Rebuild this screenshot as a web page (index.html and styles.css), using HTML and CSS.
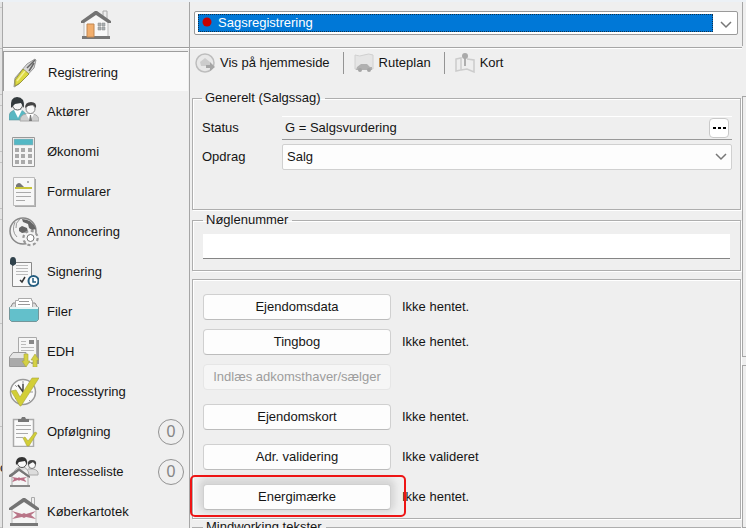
FILE: index.html
```html
<!DOCTYPE html>
<html lang="da">
<head>
<meta charset="utf-8">
<title>Sagsregistrering</title>
<link rel="stylesheet" href="styles.css">
</head>
<body>
<div class="app">
  <div class="gutter"><i></i><i></i><i></i><i></i><i></i><i></i><i></i><i></i><i></i><i></i><span>c</span><i></i></div>

  <aside class="sidebar">
    <a class="home" href="#" aria-label="Hjem">
      <svg width="30" height="30" viewBox="0 0 30 30">
        <path d="M22 1h4v9h-4z" fill="#eee" stroke="#aaa"/>
        <path d="M3 10 15 3l12 8v16H3z" fill="#f8f8f8" stroke="#bbb"/>
        <path d="M0 11 14 1h2l14 10v2h-3L15 5 3 13H0z" fill="#747474"/>
        <path d="M1 26h28v3H1z" fill="#777"/>
        <path d="M6 14h7v13H6z" fill="#f2ae6c" stroke="#c08650"/>
        <path d="M17 13h3v3h-3zm4 0h3v3h-3zm-4 4h3v3h-3zm4 0h3v3h-3z" fill="#a9b0b3" stroke="#888" stroke-width=".5"/>
      </svg>
    </a>
    <nav class="menu">
      <a class="item active" href="#">
        <svg width="30" height="30" viewBox="0 0 30 30">
          <path d="M4 29 5 20 17 6l8-5 1 1-2 8L9 26z" fill="#d8d8d8" stroke="#999"/>
          <path d="M5 22 13 11l6 5-9 9-5 3z" fill="#dcd941" stroke="#999640"/>
          <path d="M17 10 25 2M19 13l5-8" stroke="#666" stroke-width="1.500"/>
          <path d="M7 23 15 13" stroke="#f3f098" stroke-width="1.500"/>
        </svg>
        <span>Registrering</span></a>
      <a class="item" href="#">
        <svg width="30" height="30" viewBox="0 0 30 30">
          <path d="M0 19q0-4 5-6h7q6 2 6 10H0z" fill="#59b7c2" stroke="#61999f" stroke-width=".6"/>
          <path d="M5 13l4 8 4-8z" fill="#fff"/>
          <circle cx="8.500" cy="8" r="5" fill="#f5f5f5" stroke="#555"/>
          <path d="M2 11Q1 0 8 0q8 0 7 11l-3-5-6 1z" fill="#333a3d"/>
          <path d="M11 24q0-6 6-7h7q6 1 6 7z" fill="#cfcfcf" stroke="#aaa"/>
          <path d="m17 17 4 7 4-7z" fill="#fff"/><path d="m21 18-1 6h3l-1-6z" fill="#777"/>
          <circle cx="21.500" cy="12" r="4.500" fill="#f8f8f8" stroke="#888"/>
          <path d="M16 11q0-6 6-6 6 0 5 6l-3-3-5 1z" fill="#444"/>
        </svg>
        <span>Aktører</span></a>
      <a class="item" href="#">
        <svg width="30" height="30" viewBox="0 0 30 30">
          <path d="M3.500.5h22v29h-22z" fill="#f5f5f5" stroke="#999"/>
          <path d="M5 2h19v6H5z" fill="#54b8c5" stroke="#aaa" stroke-width=".5"/>
          <path d="M6 11h4v4H6zm6 0h4v4h-4zm7 0h4v4h-4zM6 17h4v4H6zm6 0h4v4h-4zm7 0h4v4h-4zM6 23h4v4H6zm6 0h4v4h-4zm7 0h4v4h-4z" fill="#aaa"/>
        </svg>
        <span>Økonomi</span></a>
      <a class="item" href="#">
        <svg width="30" height="30" viewBox="0 0 30 30">
          <path d="M6 2h21v28H6z" fill="#aaa"/><path d="M4.500.5h21v28h-21z" fill="#f7f7f7" stroke="#bbb"/>
          <path d="M7 10V8q3-4 6 0l2 2z" fill="#777"/><circle cx="19" cy="5" r="1" fill="#999"/>
          <path d="M6 10h17v2H6z" fill="#c8c53a"/>
          <path d="M7 15.500h15M7 19.500h15M7 23.500h9" stroke="#aaa"/>
        </svg>
        <span>Formularer</span></a>
      <a class="item" href="#">
        <svg width="30" height="30" viewBox="0 0 30 30">
          <circle cx="14" cy="14" r="13" fill="#f2f2f2" stroke="#888" stroke-width="1.500"/>
          <path d="M13 2q10 0 14 10l-4 1-3-2-1-4-5-2zM10 11l3-2 5 2 1 4-6 1-3-2z" fill="#666"/>
          <path d="M6 5q-4 9 2 15M11 2Q6 6 7 11" fill="none" stroke="#999"/>
          <circle cx="21.500" cy="21" r="7" fill="#f4f4f4" stroke="#999" stroke-width="2.500" stroke-dasharray="3 2.500"/>
          <circle cx="21.500" cy="21" r="6" fill="#f4f4f4"/>
          <circle cx="21.500" cy="21" r="3.500" fill="#fff" stroke="#777"/>
        </svg>
        <span>Annoncering</span></a>
      <a class="item" href="#">
        <svg width="30" height="30" viewBox="0 0 30 30">
          <path d="M3.500 5.500h19v24h-19z" fill="#f8f8f8" stroke="#888"/>
          <path d="M7 8.500h12M7 11.500h12M7 14.500h12M7 17.500h12" stroke="#bbb"/>
          <path d="M1 4q0-4 3-4t3 4v3L4 9 1 7z" fill="#30424c"/>
          <path d="m11 23 2 2 3-5" fill="none" stroke="#333" stroke-width="1.500"/>
          <circle cx="24.500" cy="24" r="5" fill="#fff" stroke="#255e80" stroke-width="2"/>
          <path d="M24 21v4h3" fill="none" stroke="#255e80" stroke-width="1.500"/>
        </svg>
        <span>Signering</span></a>
      <a class="item" href="#">
        <svg width="30" height="30" viewBox="0 0 30 30">
          <path d="M.5 12 4 6h22l3.500 6z" fill="#ddd" stroke="#888"/>
          <path d="M6.500 12V3.500h3v-2h13v2h1V12z" fill="#fff" stroke="#aaa"/>
          <path d="M10 4.500h10M9 7.500h12" stroke="#999"/>
          <path d="M.5 10.500h29v12l-2 2h-25l-2-2z" fill="#63c0cb" stroke="#74969a"/>
          <path d="M1 10h28v2H1z" fill="#e8f5f5"/>
        </svg>
        <span>Filer</span></a>
      <a class="item" href="#">
        <svg width="30" height="30" viewBox="0 0 30 30">
          <path d="M28 3h2v24h-8z" fill="#999"/><path d="M9.500.5h18v25h-18z" fill="#f6f6f6" stroke="#aaa"/>
          <path d="M20 3h5v4h-5z" fill="#888"/><path d="M12 4.500h5M12 7.500h5M12 10.500h13M12 13.500h13" stroke="#bbb"/>
          <path d="M.5 20 4 15.500h13v14H.5z" fill="#e5e5e5" stroke="#999"/><path d="M1 21h16v8H1z" fill="#aaa"/>
          <path d="M15 17h4v7h2l-4 6-4-6h2zM24 30h4v-7h2l-4-6-4 6h2z" fill="#d4d044" stroke="#aaa83b" stroke-width=".6"/>
        </svg>
        <span>EDH</span></a>
      <a class="item" href="#">
        <svg width="30" height="30" viewBox="0 0 30 30">
          <circle cx="14" cy="15" r="12.500" fill="#fafafa" stroke="#999" stroke-width="1.500"/>
          <path d="M14 4v3M4 15h3M21 15h3M6 8l2 2M20 23l2 2M6 22l2-2" stroke="#999"/>
          <path d="M14 7v8L9 8" fill="none" stroke="#444" stroke-width="1.500"/>
          <path d="m2 14 5-1 4 7L23 1h7L12 29h-1z" fill="#d2ce37" stroke="#a8a53a" stroke-width=".6"/>
        </svg>
        <span>Processtyring</span></a>
      <a class="item" href="#">
        <svg width="30" height="30" viewBox="0 0 30 30">
          <path d="M4.500 2.500h20v27h-20z" fill="#fafafa" stroke="#aaa" stroke-width="1.500"/>
          <path d="M9 5V2h3l1-2h3l1 2h3v3z" fill="#777"/>
          <path d="M7 8.500h15M7 12.500h15M7 16.500h12M7 20.500h7" stroke="#aaa"/>
          <path d="m14 21 2-1 3 4 7-9 2 1-8 13h-2z" fill="#d2ce37" stroke="#a8a53a" stroke-width=".6"/>
        </svg>
        <span>Opfølgning</span><b class="count">0</b></a>
      <a class="item" href="#">
        <svg width="30" height="30" viewBox="0 0 30 30">
          <path d="M5 15q2-5 8-5 6 0 7 8h9q1-5-5-6h-5" fill="#ddd" stroke="#aaa"/>
          <circle cx="13" cy="6" r="4.500" fill="#fafafa" stroke="#555"/><path d="M7 8q-1-8 6-8 6 0 5 8l-2-4-6 1z" fill="#333"/>
          <circle cx="23" cy="8" r="3.500" fill="#fafafa" stroke="#777"/><path d="M19 8q-1-5 4-5 5 0 4 5l-3-3z" fill="#444"/>
          <path d="M3 19 10 13l9 7v9H3z" fill="#f5f5f5" stroke="#aaa"/><path d="m0 18 10-7 11 8v2l-2-1-9-6-8 6H0z" fill="#777"/>
          <path d="M1 28h20v2H1z" fill="#888"/><path d="m3 20 6 1 1-1 1 1 7-1-3 2 3 3-7-2-1 1-1-1-6 2 2-3z" fill="#b96f85"/>
        </svg>
        <span>Interesseliste</span><b class="count">0</b></a>
      <a class="item" href="#">
        <svg width="30" height="30" viewBox="0 0 30 30">
          <path d="M22.500.5h3v9h-3z" fill="#eee" stroke="#aaa"/>
          <path d="M3 11 15 3l12 9v16H3z" fill="#f5f5f5" stroke="#bbb"/>
          <path d="M0 11 14 1h2l14 10v2h-3L15 5 3 13H0z" fill="#747474"/>
          <path d="M1 26h28v3H1z" fill="#777"/>
          <path d="m3 14 10 3 2-1 2 1 10-3-5 4 5 4-10-2-2 1-2-1-10 2 5-4z" fill="#b97588"/>
        </svg>
        <span>Køberkartotek</span></a>
    </nav>
  </aside>

  <main class="main">
    <header class="top">
      <div class="combo">
        <svg class="dot" width="10" height="10" viewBox="0 0 10 10"><circle cx="5" cy="5" r="4.500" fill="#c80000"/></svg>
        <select aria-label="Side"><option>Sagsregistrering</option></select>
        <svg class="chev" width="12" height="8" viewBox="0 0 12 8"><path d="m1 1 5 5 5-5" fill="none" stroke="#777" stroke-width="1.500"/></svg>
      </div>
    </header>

    <div class="toolbar">
      <button type="button" class="tool">
        <svg width="20" height="20" viewBox="0 0 20 20"><circle cx="10" cy="10" r="9" fill="#e8e8e8" stroke="#bdbdbd" stroke-width="1.500"/><path d="m5 9 5-4 5 4v4H6z" fill="#ccc"/><path d="M11 12h4V9l5 5-5 4v-3h-4z" fill="#a5a5a5"/></svg>
        Vis på hjemmeside</button>
      <button type="button" class="tool">
        <svg width="20" height="20" viewBox="0 0 20 20"><path d="M1 2q5 2 9 0 5-2 9 0v14q-5-2-9 0-5 2-9 0z" fill="#e5e5e5" stroke="#d0d0d0"/><path d="m2 17 1-3 4-3h6l3 3h2v3z" fill="#b0b0b0"/><circle cx="6" cy="17" r="2" fill="#a5a5a5"/><circle cx="15" cy="17" r="2" fill="#a5a5a5"/></svg>
        Ruteplan</button>
      <button type="button" class="tool">
        <svg width="20" height="20" viewBox="0 0 20 20"><path d="m1 6 5-1v12l-5 1zM12 6l7 1v12l-7-3-6 1" fill="#eee" stroke="#ccc" stroke-width="1.500"/><path d="M10 4v9" stroke="#999" stroke-width="1.500"/><circle cx="10" cy="3" r="3" fill="#aaa"/></svg>
        Kort</button>
    </div>

    <fieldset class="group general">
      <legend>Generelt (Salgssag)</legend>
      <label for="status">Status</label>
      <div class="status">
        <input id="status" value="G = Salgsvurdering" readonly>
        <button type="button" class="more" aria-label="Vælg status"><svg width="13" height="4" viewBox="0 0 13 4"><path d="M0 1h3v2H0zm5 0h3v2H5zm5 0h3v2h-3z"/></svg></button>
      </div>
      <label for="opdrag">Opdrag</label>
      <div class="pick">
        <select id="opdrag"><option>Salg</option></select>
        <svg class="chev" width="12" height="8" viewBox="0 0 12 8"><path d="m1 1 5 5 5-5" fill="none" stroke="#777" stroke-width="1.500"/></svg>
      </div>
    </fieldset>

    <fieldset class="group key">
      <legend>Nøglenummer</legend>
      <input aria-label="Nøglenummer">
    </fieldset>

    <section class="group sources">
      <div class="row"><button type="button">Ejendomsdata</button><span>Ikke hentet.</span></div>
      <div class="row"><button type="button">Tingbog</button><span>Ikke hentet.</span></div>
      <div class="row"><button type="button" disabled>Indlæs adkomsthaver/sælger</button></div>
      <div class="row spaced"><button type="button">Ejendomskort</button><span>Ikke hentet.</span></div>
      <div class="row spaced"><button type="button">Adr. validering</button><span>Ikke valideret</span></div>
      <div class="row spaced marked"><button type="button">Energimærke</button><span>Ikke hentet.</span></div>
    </section>

    <fieldset class="group texts">
      <legend>Mindworking tekster</legend>
    </fieldset>
  </main>

  <div class="edge"><div></div><div></div><div></div></div>
</div>
</body>
</html>
```
FILE: styles.css
```css
*, ::before, ::after { box-sizing: border-box; }

body {
  margin: 0;
  background: #efefef;
  color: #151515;
  font: 13px/20px "Liberation Sans", Arial, sans-serif;
}

button, input, select { font: inherit; color: inherit; margin: 0; }
a { color: inherit; text-decoration: none; }
svg { display: block; flex: none; }

.app {
  display: grid;
  grid-template-columns: 3px 187px minmax(0, 1fr) 4px;
  height: 100vh;
  overflow: hidden;
  border-top: 2px solid #ecf1f6;
}

/* Sliver of the window behind */
.gutter {
  display: grid;
  grid-template-rows: 6px 41px 46px 11px 46px 11px 46px 11px 104px 103px 82px 1fr;
  overflow: hidden;
  background: #e4e4e4;
  border-right: 1px solid #a9a9a9;
}
.gutter i { border-bottom: 1px solid #c4c4c4; }
.gutter span { display: flex; align-items: center; justify-content: flex-end; }

/* Sidebar */
.sidebar { border-right: 1px solid #a6a6a6; overflow: hidden; }
.home {
  display: flex;
  align-items: center;
  justify-content: center;
  height: 46px;
  border-bottom: 1px solid #9c9c9c;
  box-shadow: 0 1px #fff;
}
.menu { padding-top: 3px; }
.item {
  display: flex;
  align-items: center;
  gap: 8px;
  height: 40px;
  padding: 2px 5px 0 6px;
}
.active {
  background: #f9f9f9;
  border-top: 1px solid #9d9d9d;
  border-left: 1px solid #9d9d9d;
  margin-right: 1px;
}
.count {
  display: grid;
  place-items: center;
  width: 26px;
  height: 26px;
  margin-left: auto;
  border: 1px solid #929292;
  border-radius: 50%;
  color: #858585;
  font-size: 16px;
  font-weight: normal;
}

/* Main column */
.main { min-width: 0; padding-left: 2px; overflow: hidden; }
.top {
  height: 46px;
  margin-left: -2px;
  padding: 9px 4px 0;
  border-bottom: 1px solid #a6a6a6;
  box-shadow: 0 1px #fff;
}
.combo, .pick { position: relative; }
.combo {
  height: 24px;
  padding: 2px 24px 2px 3px;
  background: #fff;
  border: 1px solid #9a9a9a;
  border-radius: 2px;
}
.combo select {
  display: block;
  width: 100%;
  height: 18px;
  padding: 0 0 0 19px;
  appearance: none;
  background: #0078d7;
  border: 1px dotted #10314c;
  border-radius: 0;
  color: #fff;
  line-height: 16px;
}
.dot { position: absolute; left: 7px; top: 5px; }
.chev { position: absolute; right: 5px; top: 9px; pointer-events: none; }

.toolbar { display: flex; height: 42px; padding: 4px 0 0 3px; }
.tool {
  display: flex;
  align-items: center;
  gap: 5px;
  height: 22px;
  padding: 0 13px 0 0;
  border: 0;
  background: none;
}
.tool + .tool { padding-left: 10px; border-left: 1px solid #949494; }

.group {
  min-width: 0;
  margin: 0 1px 0 0;
  border: 1px solid #aeaeae;
  box-shadow: 1px 1px #fff, inset 1px 1px #fff;
}
.group legend { height: 16px; padding: 0 4px 0 3px; line-height: 16px; }

.general {
  display: grid;
  grid-template-columns: 80px minmax(0, 1fr);
  align-items: center;
  row-gap: 4px;
  padding: 10px 8px 39px 9px;
}
.status {
  display: flex;
  align-items: center;
  height: 24px;
  padding-right: 3px;
  border-top: 1px solid #fff;
  border-bottom: 1px solid #999;
}
.status input { flex: 1; min-width: 0; height: 20px; padding: 0 3px; border: 0; background: none; }
.more {
  display: grid;
  place-items: center;
  width: 20px;
  height: 20px;
  padding: 0;
  border: 1px solid #c9c9c9;
  border-radius: 4px;
  background: #fff;
}
.pick select {
  display: block;
  width: 100%;
  height: 26px;
  padding: 0 4px;
  appearance: none;
  background: #fdfdfd;
  border: 1px solid #d0d0d0;
  border-radius: 2px;
}

.key { margin-top: 2px; padding: 6px 10px 11px; }
.key input {
  display: block;
  width: 100%;
  height: 25px;
  padding: 0 4px;
  border: 0;
  border-bottom: 1px solid #858585;
  background: #fff;
}

.sources {
  display: flex;
  flex-direction: column;
  gap: 9px;
  margin-top: 8px;
  padding: 14px 10px 8px;
}
.row {
  position: relative;
  display: grid;
  grid-template-columns: 188px minmax(0, 1fr);
  align-items: center;
  column-gap: 11px;
}
.spaced { margin-top: 5px; }
.row button {
  height: 26px;
  padding: 0;
  border: 1px solid #d0d0d0;
  border-bottom-color: #bcbcbc;
  border-radius: 4px;
  background: #fdfdfd;
  white-space: nowrap;
}
.row button:disabled { color: #9d9d9d; border-color: #e6e6e6; background: #f6f6f6; }
.marked::after {
  content: "";
  position: absolute;
  left: -13px;
  top: -9px;
  width: 216px;
  height: 42px;
  border: 2px solid #ee1515;
  border-radius: 5px;
  pointer-events: none;
}
.marked button { box-shadow: 0 -2px 6px 4px #d6d6d6; }
.texts { height: 60px; padding: 0 10px; }

/* Start of the neighbouring pane */
.edge { display: grid; grid-template-rows: 44px 50px 261px 8px 1fr; }
.edge div { border: 1px solid #a6a6a6; border-right: 0; }
.edge div:nth-child(1) { border-top: 0; border-bottom: 0; }
.edge div:nth-child(2) { grid-row: 3; }
.edge div:nth-child(3) { grid-row: 5; }
```
